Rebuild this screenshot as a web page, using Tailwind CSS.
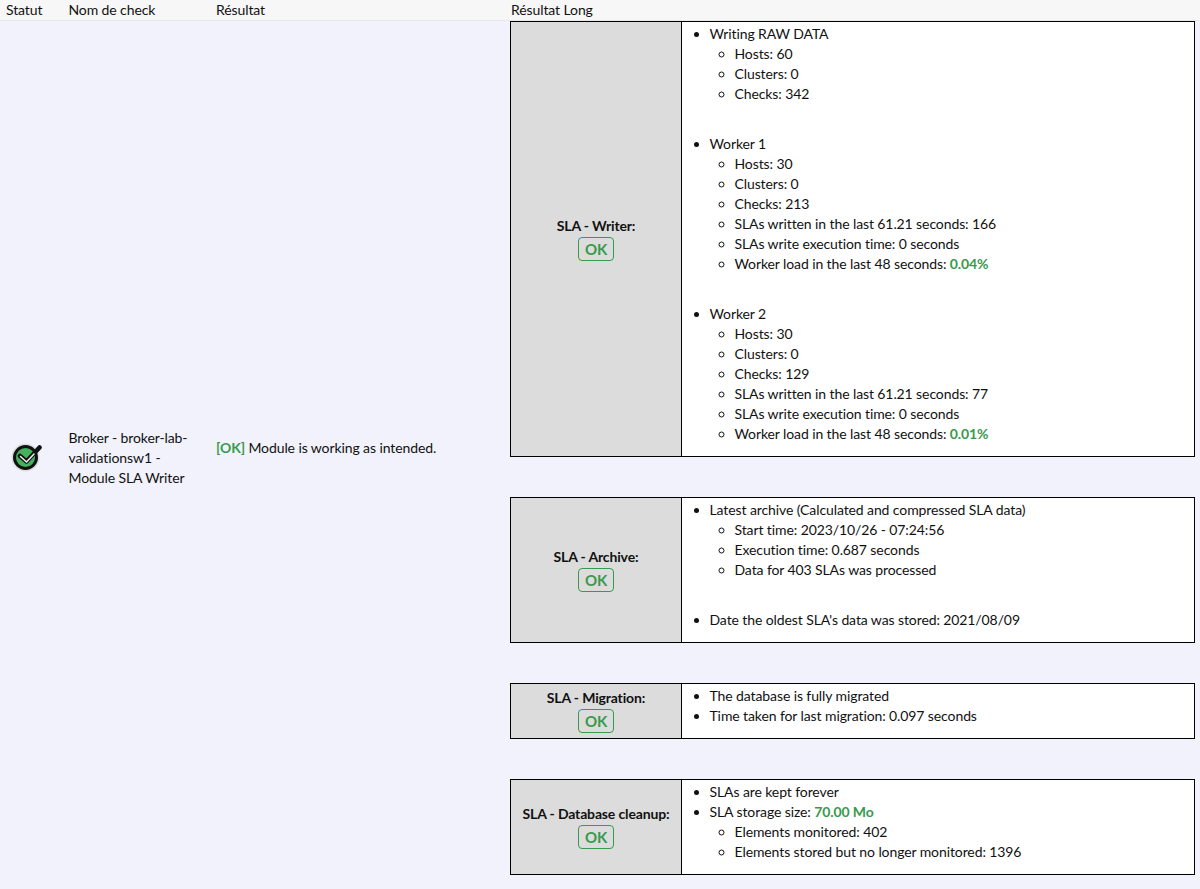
<!DOCTYPE html>
<html lang="fr">
  <head>
    <meta charset="UTF-8" />
    <title>Résultat Long</title>
    <script src="https://cdn.jsdelivr.net/npm/@tailwindcss/browser@4"></script>
  </head>
  <body class="bg-[#f1f2fb] text-[#111] font-['Lato',sans-serif] text-[14px] leading-[20px] tracking-[-0.1px]">
    <!-- header -->
    <div class="flex h-[21px] bg-[#f7f7f7] border-b border-[#e8e8e8]">
      <div class="w-[68.5px] pl-[6px]">Statut</div>
      <div class="w-[147.5px]">Nom de check</div>
      <div class="w-[295px]">Résultat</div>
      <div>Résultat Long</div>
    </div>

    <div class="flex h-[868px]">
      <div class="flex items-center h-full pt-[6px]">
        <div class="w-[68.5px] pl-[10px]">
          <svg width="32" height="32" viewBox="0 0 32 32">
            <circle cx="15.5" cy="15.5" r="14" fill="#dedede" />
            <circle cx="15.5" cy="15.5" r="11" fill="#45b060" stroke="#111" stroke-width="3" />
            <path d="M10 14l6.5 5.5L29.5 5.5" fill="none" stroke="#111" stroke-width="4.5" stroke-linecap="round" stroke-linejoin="round" />
            <path d="M10.5 14.5l6 5.5L24 12" fill="none" stroke="#f2f2f2" stroke-width="1.5" stroke-linecap="round" stroke-linejoin="round" />
          </svg>
        </div>
        <div class="w-[147.5px] pr-[20px]">Broker - broker-lab-validationsw1 - Module SLA Writer</div>
        <div class="w-[294px] mb-[20px]"><span class="font-bold text-[#389a4c]">[OK]</span> Module is working as intended.</div>
      </div>

      <div class="w-[685px] flex flex-col gap-[40px] self-start">
        <!-- SLA - Writer -->
        <div class="flex h-[436px] border border-black">
          <div class="w-[171px] bg-[#dcdcdc] border-r border-black flex flex-col items-center justify-center pb-[2px]">
            <span class="font-bold tracking-[-0.15px]">SLA - Writer:</span>
            <span class="mt-[1px] px-[6px] h-[24px] border border-[#389a4c] rounded-[4px] text-[#389a4c] font-bold text-[15px] leading-[22px]">OK</span>
          </div>
          <div class="flex-1 bg-white pt-[2px]">
            <ul class="list-disc pl-[27.5px]">
              <li>Writing RAW DATA
                <ul class="list-[circle] pl-[25px]">
                  <li>Hosts: 60</li>
                  <li>Clusters: 0</li>
                  <li>Checks: 342</li>
                </ul>
              </li>
              <li class="mt-[30px]">Worker 1
                <ul class="list-[circle] pl-[25px]">
                  <li>Hosts: 30</li>
                  <li>Clusters: 0</li>
                  <li>Checks: 213</li>
                  <li>SLAs written in the last 61.21 seconds: 166</li>
                  <li>SLAs write execution time: 0 seconds</li>
                  <li>Worker load in the last 48 seconds: <span class="font-bold text-[#389a4c]">0.04%</span></li>
                </ul>
              </li>
              <li class="mt-[30px]">Worker 2
                <ul class="list-[circle] pl-[25px]">
                  <li>Hosts: 30</li>
                  <li>Clusters: 0</li>
                  <li>Checks: 129</li>
                  <li>SLAs written in the last 61.21 seconds: 77</li>
                  <li>SLAs write execution time: 0 seconds</li>
                  <li>Worker load in the last 48 seconds: <span class="font-bold text-[#389a4c]">0.01%</span></li>
                </ul>
              </li>
            </ul>
          </div>
        </div>

        <!-- SLA - Archive -->
        <div class="flex h-[146px] border border-black">
          <div class="w-[171px] bg-[#dcdcdc] border-r border-black flex flex-col items-center justify-center pb-[2px]">
            <span class="font-bold tracking-[-0.15px]">SLA - Archive:</span>
            <span class="mt-[1px] px-[6px] h-[24px] border border-[#389a4c] rounded-[4px] text-[#389a4c] font-bold text-[15px] leading-[22px]">OK</span>
          </div>
          <div class="flex-1 bg-white pt-[2px]">
            <ul class="list-disc pl-[27.5px]">
              <li>Latest archive (Calculated and compressed SLA data)
                <ul class="list-[circle] pl-[25px]">
                  <li>Start time: 2023/10/26 - 07:24:56</li>
                  <li>Execution time: 0.687 seconds</li>
                  <li>Data for 403 SLAs was processed</li>
                </ul>
              </li>
              <li class="mt-[30px]">Date the oldest SLA's data was stored: 2021/08/09</li>
            </ul>
          </div>
        </div>

        <!-- SLA - Migration -->
        <div class="flex h-[56px] border border-black">
          <div class="w-[171px] bg-[#dcdcdc] border-r border-black flex flex-col items-center justify-center pb-[2px]">
            <span class="font-bold tracking-[-0.15px]">SLA - Migration:</span>
            <span class="mt-[1px] px-[6px] h-[24px] border border-[#389a4c] rounded-[4px] text-[#389a4c] font-bold text-[15px] leading-[22px]">OK</span>
          </div>
          <div class="flex-1 bg-white pt-[2px]">
            <ul class="list-disc pl-[27.5px]">
              <li>The database is fully migrated</li>
              <li>Time taken for last migration: 0.097 seconds</li>
            </ul>
          </div>
        </div>

        <!-- SLA - Database cleanup -->
        <div class="flex h-[96px] border border-black">
          <div class="w-[171px] bg-[#dcdcdc] border-r border-black flex flex-col items-center justify-center pb-[2px]">
            <span class="font-bold tracking-[-0.15px]">SLA - Database cleanup:</span>
            <span class="mt-[1px] px-[6px] h-[24px] border border-[#389a4c] rounded-[4px] text-[#389a4c] font-bold text-[15px] leading-[22px]">OK</span>
          </div>
          <div class="flex-1 bg-white pt-[2px]">
            <ul class="list-disc pl-[27.5px]">
              <li>SLAs are kept forever</li>
              <li>SLA storage size: <span class="font-bold text-[#389a4c]">70.00 Mo</span>
                <ul class="list-[circle] pl-[25px]">
                  <li>Elements monitored: 402</li>
                  <li>Elements stored but no longer monitored: 1396</li>
                </ul>
              </li>
            </ul>
          </div>
        </div>
      </div>
    </div>
  </body>
</html>
